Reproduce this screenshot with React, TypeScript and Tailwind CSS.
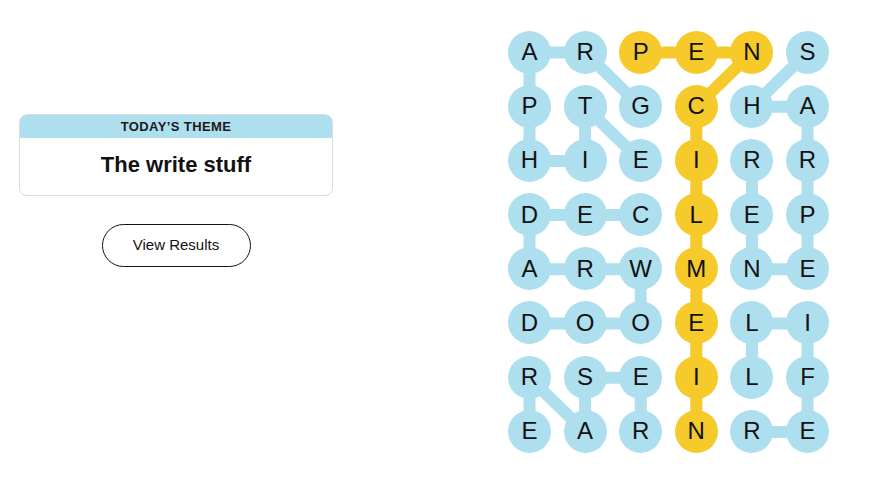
const letters = [
  'ARPENS',
  'PTGCHA',
  'HIEIRR',
  'DECLEP',
  'ARWMNE',
  'DOOELI',
  'RSEILF',
  'EARNRE',
];

type P = [number, number];

const blueWords: P[][] = [
  [[1, 2], [0, 1], [0, 0], [1, 0], [2, 0], [2, 1], [1, 1], [2, 2]],
  [[0, 5], [1, 4], [1, 5], [2, 5], [3, 5], [4, 5], [4, 4], [3, 4], [2, 4]],
  [[3, 2], [3, 1], [3, 0], [4, 0], [4, 1], [4, 2], [5, 2], [5, 1], [5, 0]],
  [[7, 0], [6, 0], [7, 1], [6, 1], [6, 2], [7, 2]],
  [[7, 4], [7, 5], [6, 5], [5, 5], [5, 4], [6, 4]],
];

const spangram: P[] = [[0, 2], [0, 3], [0, 4], [1, 3], [2, 3], [3, 3], [4, 3], [5, 3], [6, 3], [7, 3]];

const SIZE = 43;
const COL = 55.6;
const ROW = 54.2;
const BLUE = '#aedfee';
const YELLOW = '#f6ca2b';

const cx = (c: number) => SIZE / 2 + c * COL;
const cy = (r: number) => SIZE / 2 + r * ROW;
const toPts = (path: P[]) => path.map(([r, c]) => `${cx(c)},${cy(r)}`).join(' ');

const isGold = (r: number, c: number) => spangram.some(([a, b]) => a === r && b === c);

function Board() {
  return (
    <div className="relative">
      {/* connectors drawn under the letter circles */}
      <svg className="absolute inset-0 h-full w-full" aria-hidden>
        {blueWords.map((w, i) => (
          <polyline key={i} points={toPts(w)} fill="none" stroke={BLUE} strokeWidth={12} strokeLinejoin="round" />
        ))}
        <polyline points={toPts(spangram)} fill="none" stroke={YELLOW} strokeWidth={12} strokeLinejoin="round" />
      </svg>
      <div className="relative grid grid-cols-[repeat(6,43px)] gap-x-[12.6px] gap-y-[11.2px]">
        {letters.map((row, r) =>
          row.split('').map((ch, c) => (
            <div
              key={`${r}-${c}`}
              className={`flex h-[43px] w-[43px] items-center justify-center rounded-full text-[24px] leading-none text-[#121212] ${
                isGold(r, c) ? 'bg-[#f6ca2b]' : 'bg-[#aedfee]'
              }`}
            >
              {ch}
            </div>
          ))
        )}
      </div>
    </div>
  );
}

export default function App() {
  return (
    <div className="flex h-[483px] w-[872px] bg-white font-['Liberation_Sans',Arial,sans-serif] text-[#121212]">
      <div className="flex w-[352px] flex-col items-center pt-[114px]">
        <div className="w-[314px] overflow-hidden rounded-lg border border-[#dcdcdc]">
          <div className="flex h-[23px] items-center justify-center bg-[#aedfee] text-[13px] font-bold tracking-[0.03em] text-[#1a1a1a]">
            TODAY’S THEME
          </div>
          <div className="flex h-[57px] items-center justify-center pb-[4px] text-[22px] font-bold">The write stuff</div>
        </div>
        <button className="mt-[28px] h-[43px] w-[149px] rounded-full border border-[#121212] text-[15px] text-[#121212]">
          View Results
        </button>
      </div>
      <div className="ml-[156px] pt-[30.5px]">
        <Board />
      </div>
    </div>
  );
}
